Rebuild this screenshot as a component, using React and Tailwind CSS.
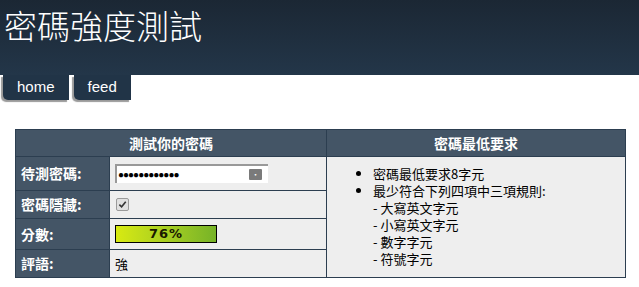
const font = { fontFamily: '"Noto Sans CJK TC", "Noto Sans", sans-serif' };

function Tab({ label }) {
    return (
        <div className="h-[25px] flex items-center px-[14px] bg-[#213447] text-white text-[15px] rounded-bl-[5px] shadow-[-2px_2px_1px_#9a9a9a] font-['Liberation_Sans',sans-serif]">
            {label}
        </div>
    );
}

function Label({ children, h }) {
    return (
        <td className={`${h} bg-[#445566] border border-[#2c3e50] px-[5px] text-white font-bold text-[14px]`}>
            {children}
        </td>
    );
}

export default function App() {
    return (
        <div className="w-[639px] h-[287px] bg-white overflow-hidden" style={font}>
            <div className="h-[75px] bg-gradient-to-b from-[#1b2734] to-[#233649] px-[4px] pt-[2px]">
                <h1 className="text-white text-[33px] font-light leading-[46px]">密碼強度測試</h1>
            </div>
            <div className="flex gap-[5px] pl-[3px] bg-white">
                <Tab label="home" />
                <Tab label="feed" />
            </div>

            <table className="ml-[15px] mt-[29px] border-collapse table-fixed w-[611px] text-[13px]">
                <colgroup>
                    <col className="w-[94px]" />
                    <col className="w-[217px]" />
                    <col />
                </colgroup>
                <thead>
                    <tr className="h-[27px]">
                        <th colSpan={2} className="bg-[#445566] border border-[#2c3e50] text-white font-bold text-[14px]">
                            測試你的密碼
                        </th>
                        <th className="bg-[#445566] border border-[#2c3e50] text-white font-bold text-[14px]">
                            密碼最低要求
                        </th>
                    </tr>
                </thead>
                <tbody>
                    <tr>
                        <Label h="h-[34px]">待測密碼:</Label>
                        <td className="bg-[#eeeeee] border border-[#2c3e50] px-[5px]">
                            <div className="w-[153px] h-[19px] bg-white border-t-2 border-l-2 border-[#999999] flex items-center justify-between pl-[1px] pr-[6px]">
                                <span className="text-[10px] leading-none tracking-[-1px] text-black font-['Liberation_Sans',sans-serif]">●●●●●●●●●●●●</span>
                                <span className="w-[13px] h-[11px] bg-[#7a7a7a] rounded-[1px] flex items-center justify-center text-white text-[8px] leading-none">···</span>
                            </div>
                        </td>
                        <td rowSpan={4} className="bg-[#eeeeee] border border-[#2c3e50] align-top pl-[32px] pt-[8px] leading-[17px] text-black">
                            <ul className="list-disc pl-[14px]">
                                <li>密碼最低要求8字元</li>
                                <li>
                                    最少符合下列四項中三項規則:
                                    <div>- 大寫英文字元</div>
                                    <div>- 小寫英文字元</div>
                                    <div>- 數字字元</div>
                                    <div>- 符號字元</div>
                                </li>
                            </ul>
                        </td>
                    </tr>
                    <tr>
                        <Label h="h-[28px]">密碼隱藏:</Label>
                        <td className="bg-[#eeeeee] border border-[#2c3e50] px-[6px]">
                            <div className="w-[13px] h-[13px] rounded-[2px] border border-[#9a9a9a] bg-[#e0e0e0] flex items-center justify-center">
                                <svg width="9" height="9" viewBox="0 0 10 10">
                                    <path d="M1.5 5.2 L4 7.6 L8.6 2" fill="none" stroke="#333" strokeWidth="1.8" />
                                </svg>
                            </div>
                        </td>
                    </tr>
                    <tr>
                        <Label h="h-[31px]">分數:</Label>
                        <td className="bg-[#eeeeee] border border-[#2c3e50] px-[5px]">
                            <div className="w-[102px] h-[18px] border border-black bg-gradient-to-r from-[#d8ea10] to-[#76b327] flex items-center justify-center font-bold text-[13px] text-[#1a1a00] tracking-[1px] font-['DejaVu_Sans',sans-serif]">
                                76%
                            </div>
                        </td>
                    </tr>
                    <tr>
                        <Label h="h-[28px]">評語:</Label>
                        <td className="bg-[#eeeeee] border border-[#2c3e50] px-[5px] text-black">強</td>
                    </tr>
                </tbody>
            </table>
        </div>
    );
}
